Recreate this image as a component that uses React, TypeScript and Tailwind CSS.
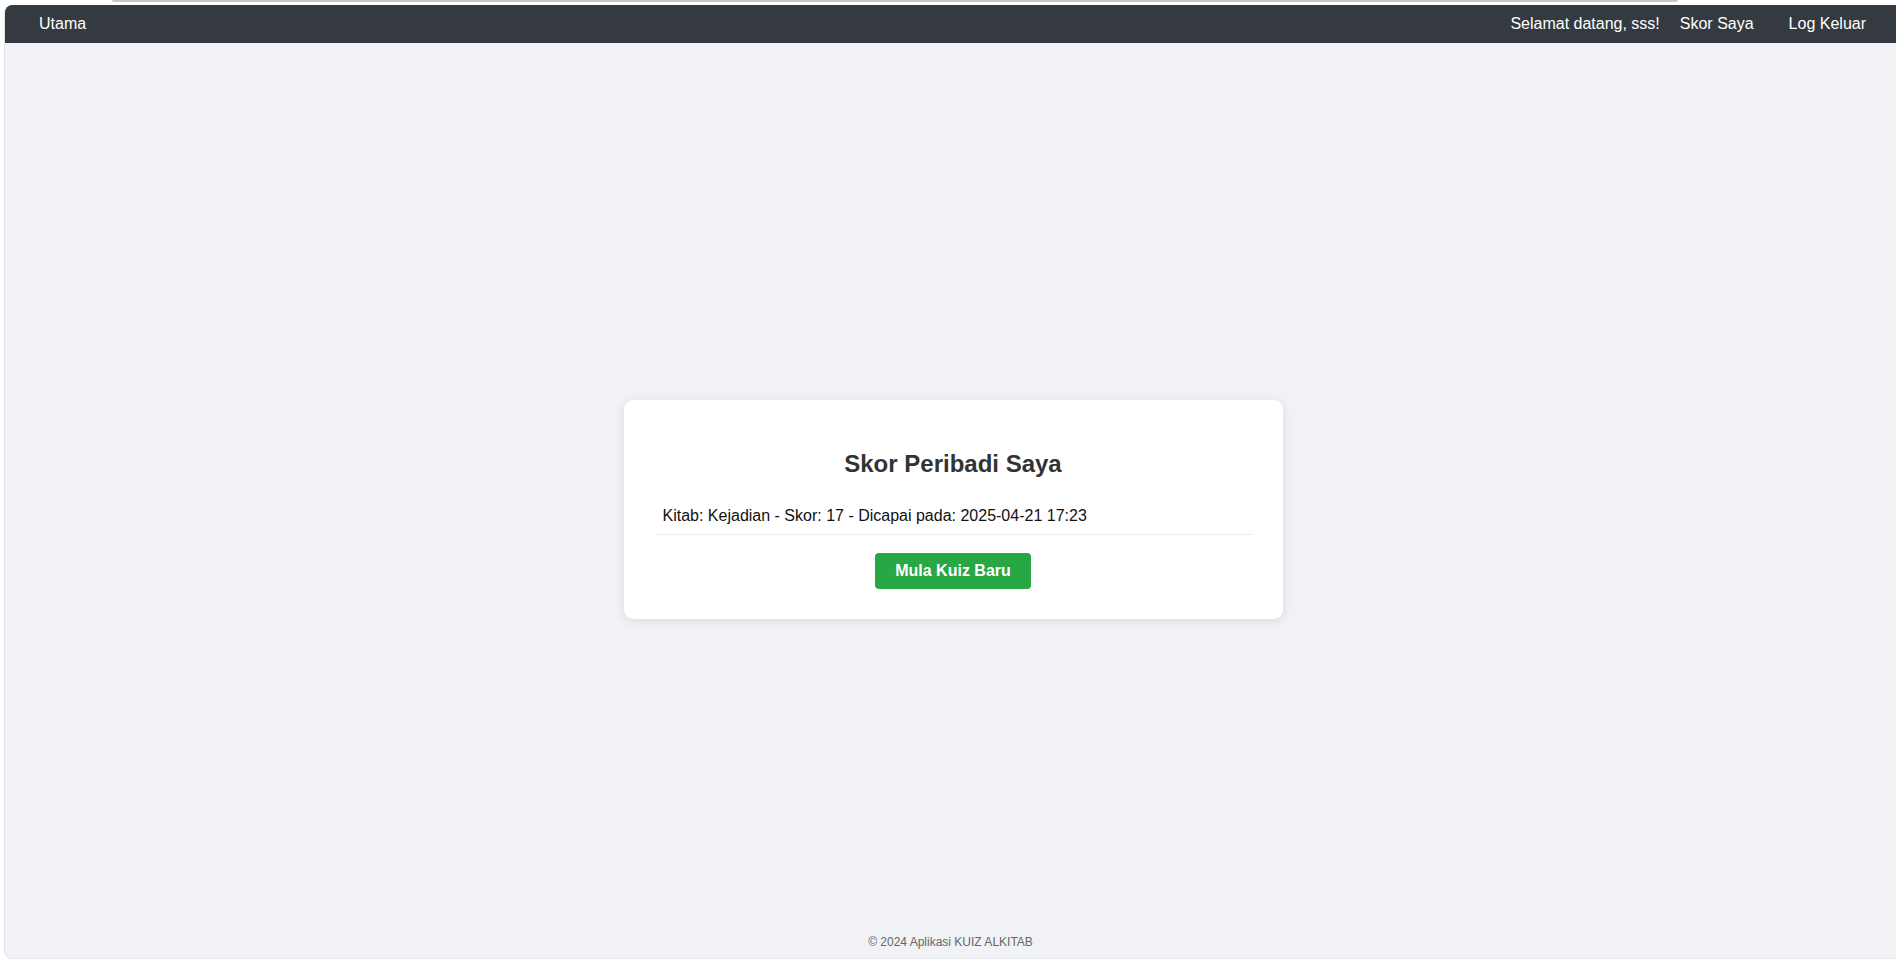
export default function App() {
  return (
    <div className="h-[959px] w-full overflow-hidden bg-white font-['Liberation_Sans',Arial,sans-serif]">
      {/* strip above the frame */}
      <div className="h-[5px] flex">
        <div className="ml-[112px] w-[1566px] h-[2px] bg-[#c9c9c9] rounded-b-sm" />
      </div>

      <div className="ml-[4px] h-[954px] flex flex-col bg-[#f0f2f5] rounded-l-[8px] border-l border-b border-[#e3e4e7] overflow-hidden">
        {/* Nav */}
        <nav className="h-[38px] shrink-0 bg-[#343a40] text-white text-[16px] flex items-center pl-[34px] pr-[30px]">
          <a className="cursor-pointer">Utama</a>
          <div className="ml-auto flex items-center">
            <span>Selamat datang, sss!</span>
            <a className="ml-[20px] cursor-pointer">Skor Saya</a>
            <a className="ml-[35px] cursor-pointer">Log Keluar</a>
          </div>
        </nav>

        {/* Main */}
        <main className="flex-1 flex items-center justify-center pt-[51px] pl-[5px]">
          <div className="w-[659px] bg-white rounded-[9px] shadow-[0_2px_10px_rgba(0,0,0,0.1)] px-[30px] pt-[30px] pb-[30px] text-center">
            <h2 className="mt-[20px] mb-[20px] text-[24px] leading-[28px] font-bold text-[#333]">
              Skor Peribadi Saya
            </h2>
            <ul className="text-left mb-[18px]">
              <li className="py-[9px] pl-[9px] border-b border-[#eee] text-[16px] leading-[18px] text-[#111]">
                Kitab: Kejadian - Skor: 17 - Dicapai pada: 2025-04-21 17:23
              </li>
            </ul>
            <button className="bg-[#28a745] text-white font-bold text-[16px] leading-[18px] px-[20px] py-[9px] rounded-[4px] cursor-pointer">
              Mula Kuiz Baru
            </button>
          </div>
        </main>

        {/* Footer */}
        <footer className="h-[33px] shrink-0 flex items-center justify-center text-[12px] text-[#666]">
          © 2024 Aplikasi KUIZ ALKITAB
        </footer>
      </div>
    </div>
  )
}
